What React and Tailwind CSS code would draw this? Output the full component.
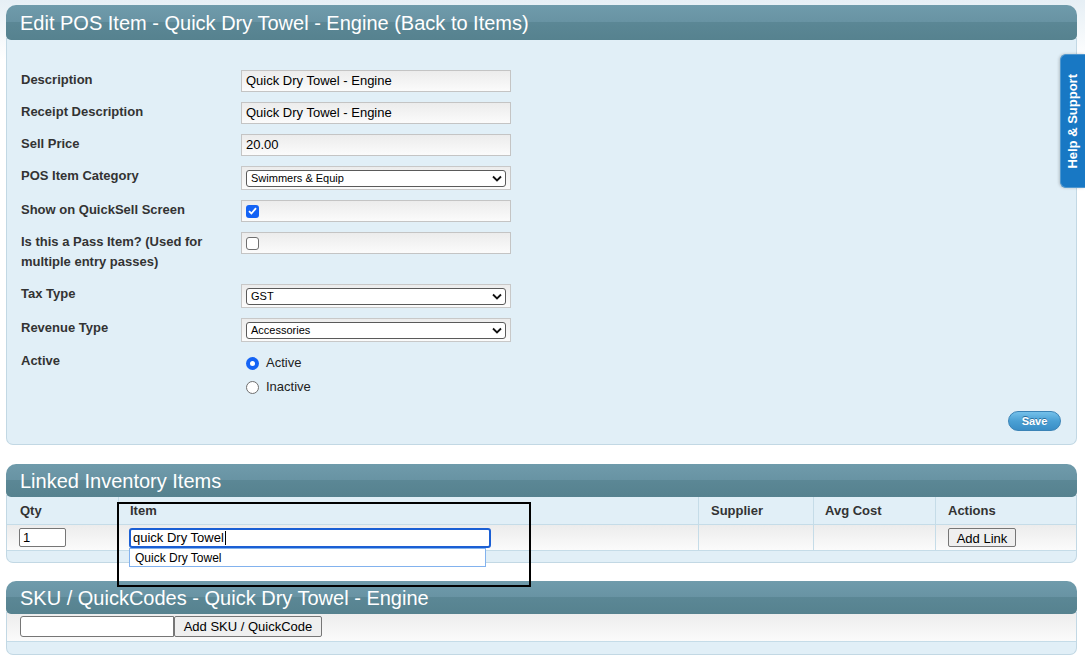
import { useState } from 'react';

const Header = ({ title, h = 'h-[35px]' }) => (
  <div className={`${h} relative z-10 flex items-center rounded-t-[10px] rounded-b-[5px] bg-[linear-gradient(#6f9bab,#6893a3_50%,#5b8795_50%,#56828f)] pl-[14px] text-[20px] leading-none text-white`}>
    {title}
  </div>
);

const TextBox = ({ value }) => (
  <div className="flex h-[22px] w-[270px] items-center border border-[#c4c4c4] bg-[linear-gradient(#ececec,#fbfbfb)] px-[4px] text-[13px] text-black">
    {value}
  </div>
);

const SelectBox = ({ value }) => (
  <div className="flex h-[24px] w-[270px] items-center border border-[#c8c8c8] bg-[linear-gradient(#ececec,#fbfbfb)] px-[4px]">
    <div className="flex h-[17px] w-full items-center justify-between rounded-[3px] border border-[#5a5a5a] bg-white pl-[4px] pr-[3px] text-[11px] text-black">
      <span>{value}</span>
      <svg width="10" height="7" viewBox="0 0 10 7"><path d="M1 1.5 L5 5.5 L9 1.5" fill="none" stroke="#111" strokeWidth="1.8" /></svg>
    </div>
  </div>
);

const CheckBox = ({ checked }) => (
  <div className="flex h-[22px] w-[270px] items-center border border-[#c4c4c4] bg-[linear-gradient(#ececec,#fbfbfb)] px-[4px]">
    {checked ? (
      <div className="flex h-[13px] w-[13px] items-center justify-center rounded-[3px] bg-[#1463f5]">
        <svg width="9" height="8" viewBox="0 0 9 8"><path d="M1 4.2 L3.4 6.5 L8 1.2" fill="none" stroke="white" strokeWidth="1.8" /></svg>
      </div>
    ) : (
      <div className="h-[13px] w-[13px] rounded-[3px] border border-[#6f6f6f] bg-white" />
    )}
  </div>
);

const Row = ({ label, children, className = '' }) => (
  <div className={`flex items-start ${className}`}>
    <div className="w-[220px] text-[13px] font-bold leading-[20px] text-[#333]">{label}</div>
    {children}
  </div>
);

const Radio = ({ checked, label }) => (
  <div className="flex h-[24px] items-center pl-[5px]">
    {checked ? (
      <div className="flex h-[13px] w-[13px] items-center justify-center rounded-full bg-[#1463f5]">
        <div className="h-[5px] w-[5px] rounded-full bg-white" />
      </div>
    ) : (
      <div className="h-[13px] w-[13px] rounded-full border border-[#6f6f6f] bg-white" />
    )}
    <span className="ml-[7px] text-[13px] text-[#222]">{label}</span>
  </div>
);

export default function App() {
  const [active, setActive] = useState(true);

  return (
    <div className="relative min-h-[660px] bg-[linear-gradient(#e6eff5,#ffffff_60px)] pt-[5px] font-['Liberation_Sans',Arial,sans-serif]">
      {/* Edit panel */}
      <div className="ml-[6px] w-[1071px]">
        <Header title="Edit POS Item - Quick Dry Towel - Engine (Back to Items)" />
        <div className="-mt-[2px] rounded-b-[7px] border border-t-0 border-[#c2d8e4] bg-[#e1eff7] pb-[13px] pl-[14px] pr-[15px] pt-[32px]">
          <div className="flex flex-col gap-[10px]">
            <Row label="Description"><TextBox value="Quick Dry Towel - Engine" /></Row>
            <Row label="Receipt Description"><TextBox value="Quick Dry Towel - Engine" /></Row>
            <Row label="Sell Price"><TextBox value="20.00" /></Row>
            <Row label="POS Item Category"><SelectBox value="Swimmers & Equip" /></Row>
            <Row label="Show on QuickSell Screen"><CheckBox checked /></Row>
            <Row label={<>Is this a Pass Item? (Used for<br />multiple entry passes)</>}><CheckBox /></Row>
            <Row label="Tax Type" className="mt-[2px]"><SelectBox value="GST" /></Row>
            <Row label="Revenue Type"><SelectBox value="Accessories" /></Row>
            <Row label="Active" className="-mt-[1px]">
              <div className="flex flex-col" onClick={() => setActive(!active)}>
                <Radio checked={active} label="Active" />
                <Radio checked={!active} label="Inactive" />
              </div>
            </Row>
          </div>
          <div className="mt-[12px] flex justify-end">
            <button className="h-[20px] w-[53px] rounded-full border border-[#3a83b6] bg-[linear-gradient(#74c0ea,#4aa0d4_50%,#3a8ec6)] text-[11px] font-bold text-white [text-shadow:0_-1px_0_#2a6d9c]">
              Save
            </button>
          </div>
        </div>
      </div>

      {/* Linked inventory */}
      <div className="ml-[6px] mt-[19px] w-[1071px]">
        <Header title="Linked Inventory Items" h="h-[33px]" />
        <div className="-mt-[2px] rounded-b-[7px] border border-t-0 border-[#c2d8e4] bg-[#e1eff7]">
          <div className="grid grid-cols-[111px_580px_115px_122px_1fr] border-b border-[#c5dce8] text-[13px] font-bold text-[#333]">
            <div className="h-[29px] pl-[13px] pt-[6px]">Qty</div>
            <div className="border-l border-[#c5dce8] pl-[11px] pt-[6px]">Item</div>
            <div className="border-l border-[#c5dce8] pl-[12px] pt-[6px]">Supplier</div>
            <div className="border-l border-[#c5dce8] pl-[11px] pt-[6px]">Avg Cost</div>
            <div className="border-l border-[#c5dce8] pl-[12px] pt-[6px]">Actions</div>
          </div>
          <div className="grid h-[26px] grid-cols-[111px_580px_115px_122px_1fr] border-b border-[#c5dce8] bg-[linear-gradient(#ececec,#fbfbfb)]">
            <div className="flex items-center pl-[12px]">
              <div className="flex h-[19px] w-[47px] items-center rounded-[2px] border border-[#767676] bg-white pl-[3px] text-[13px]">1</div>
            </div>
            <div className="relative flex items-center border-l border-[#c5dce8] pl-[10px]">
              <div className="flex h-[20px] w-[362px] items-center rounded-[3px] border-2 border-[#1b5fd4] bg-white pl-[2px] text-[13px] text-black">
                quick Dry Towel<span className="ml-[1px] h-[14px] w-px bg-black" />
              </div>
              <div className="absolute left-[10px] top-[23px] z-20 flex h-[19px] w-[357px] items-center border border-[#82b2ee] bg-white pl-[5px] text-[12px] text-black">
                Quick Dry Towel
              </div>
            </div>
            <div className="border-l border-[#c5dce8]" />
            <div className="border-l border-[#c5dce8]" />
            <div className="flex items-center border-l border-[#c5dce8] pl-[12px]">
              <button className="h-[19px] w-[68px] rounded-[2px] border border-[#767676] bg-[#efefef] text-[13px] text-black">Add Link</button>
            </div>
          </div>
          <div className="h-[11px]" />
        </div>
      </div>

      {/* SKU */}
      <div className="ml-[6px] mt-[18px] w-[1071px]">
        <Header title="SKU / QuickCodes - Quick Dry Towel - Engine" h="h-[33px]" />
        <div className="-mt-[2px] rounded-b-[7px] border border-t-0 border-[#c2d8e4] bg-[#e1eff7]">
          <div className="flex h-[30px] items-center border-b border-[#c5dce8] bg-[linear-gradient(#ececec,#fbfbfb)] pl-[13px]">
            <div className="h-[21px] w-[154px] rounded-l-[3px] border border-[#767676] bg-white" />
            <button className="h-[21px] w-[148px] rounded-[2px] border border-[#767676] bg-[#efefef] text-[13px] text-black">Add SKU / QuickCode</button>
          </div>
          <div className="h-[12px]" />
        </div>
      </div>

      {/* annotation box */}
      <div className="pointer-events-none absolute left-[117px] top-[502px] z-30 h-[85px] w-[414px] border-2 border-black" />

      {/* Help & Support tab */}
      <div className="absolute left-[1060px] top-[54px] z-40 flex h-[134px] w-[25px] items-center justify-center rounded-l-[6px] border border-r-0 border-[#4f97cf] bg-[#1878c4] shadow-[-1px_0_3px_rgba(0,0,0,0.2)]">
        <span className="rotate-180 text-[13px] font-bold text-white [writing-mode:vertical-rl]">Help &amp; Support</span>
      </div>
    </div>
  );
}
